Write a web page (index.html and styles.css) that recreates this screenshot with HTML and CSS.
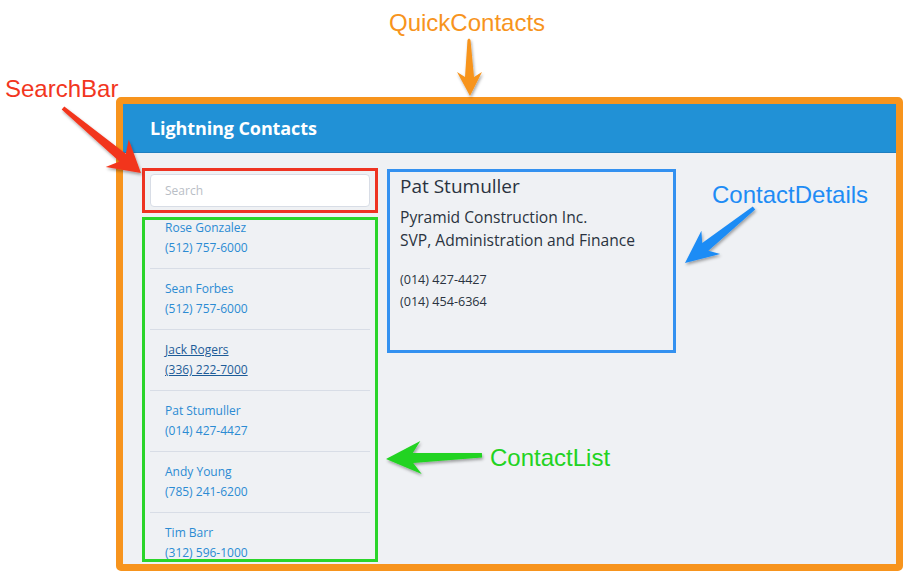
FILE: index.html
```html
<!DOCTYPE html>
<html lang="en">
<head>
<meta charset="utf-8">
<title>QuickContacts</title>
<link rel="stylesheet" href="styles.css">
</head>
<body>
<div class="page">
  <div class="annot annot-quick">QuickContacts</div>
  <div class="annot annot-search">SearchBar</div>
  <div class="annot annot-details">ContactDetails</div>
  <div class="annot annot-list">ContactList</div>

  <div class="frame">
    <header class="app-header"><h1 class="app-title">Lightning Contacts</h1></header>
    <div class="app-body">
      <div class="left-col">
        <div class="search-box"><input class="search-input" type="text" placeholder="Search"></div>
        <div class="list-box">
          <ul class="contact-list">
            <li class="contact-item"><a class="contact-link" href="#"><span class="c-name">Rose Gonzalez</span><span class="c-phone">(512) 757-6000</span></a></li>
            <li class="contact-item"><a class="contact-link" href="#"><span class="c-name">Sean Forbes</span><span class="c-phone">(512) 757-6000</span></a></li>
            <li class="contact-item"><a class="contact-link hover" href="#"><span class="c-name">Jack Rogers</span><span class="c-phone">(336) 222-7000</span></a></li>
            <li class="contact-item"><a class="contact-link" href="#"><span class="c-name">Pat Stumuller</span><span class="c-phone">(014) 427-4427</span></a></li>
            <li class="contact-item"><a class="contact-link" href="#"><span class="c-name">Andy Young</span><span class="c-phone">(785) 241-6200</span></a></li>
            <li class="contact-item"><a class="contact-link" href="#"><span class="c-name">Tim Barr</span><span class="c-phone">(312) 596-1000</span></a></li>
          </ul>
        </div>
      </div>
      <div class="details-box">
        <div class="d-name">Pat Stumuller</div>
        <div class="d-company">Pyramid Construction Inc.<br>SVP, Administration and Finance</div>
        <div class="d-phones">(014) 427-4427<br>(014) 454-6364</div>
      </div>
    </div>
  </div>

  <svg class="arrows" width="904" height="572" viewBox="0 0 904 572" aria-hidden="true">
    <defs>
      <filter id="sh" x="-20%" y="-20%" width="140%" height="140%">
        <feDropShadow dx="1" dy="2" stdDeviation="1.5" flood-color="#000" flood-opacity="0.35"/>
      </filter>
    </defs>
    <path filter="url(#sh)" fill="#f7941d" d="M467.5,40 Q469,37 470.5,40 L474,77 L482,72 L470,96 L457,72 L465,77 Z"/>
    <path filter="url(#sh)" fill="#f2361e" d="M61.7,109.5 L119.4,161.4 L105.7,167 L141,173 L128.7,139.4 L125.8,153.8 L64.3,106.5 Z"/>
    <path filter="url(#sh)" fill="#1e8cf5" d="M752.8,206.4 L702.2,242.9 L701.4,230.7 L685,263 L720.2,254.1 L708.4,250.7 L755.2,209.6 Z"/>
    <path filter="url(#sh)" fill="#22d322" d="M481.9,453 L412.8,452.9 L420.3,441 L386,459 L421.7,474 L413.2,462.9 L482.1,457.5 Z"/>
  </svg>
</div>
</body>
</html>
```
FILE: styles.css
```css
html, body {
  margin: 0;
  padding: 0;
  background: #ffffff;
}

.page {
  position: relative;
  width: 904px;
  height: 572px;
  box-sizing: border-box;
  padding: 97px 0 0 116px;
  overflow: hidden;
  background: #ffffff;
}

.annot {
  position: absolute;
  font-family: "Liberation Sans", Arial, sans-serif;
  font-size: 24px;
  line-height: 24px;
  white-space: nowrap;
}
.annot-quick { left: 389px; top: 11px; color: #f7941d; }
.annot-search { left: 5px; top: 77px; color: #f2361e; }
.annot-details { left: 712px; top: 183px; color: #1e8cf5; }
.annot-list { left: 490px; top: 446px; color: #22d322; }

.arrows {
  position: absolute;
  left: 0;
  top: 0;
  pointer-events: none;
}

.frame {
  width: 787px;
  height: 474px;
  box-sizing: border-box;
  border: 7px solid #f7941d;
  border-radius: 5px;
  background: #eff1f4;
  display: flex;
  flex-direction: column;
  overflow: hidden;
}

.app-header {
  flex: none;
  height: 49px;
  box-sizing: border-box;
  background: #2191d6;
  border-bottom: 1px solid #1f7fc0;
  display: flex;
  align-items: center;
  padding-left: 27px;
}

.app-title {
  margin: 0;
  font-family: "Open Sans", "Noto Sans", sans-serif;
  font-weight: 700;
  font-size: 18px;
  color: #ffffff;
  letter-spacing: -0.1px;
}

.app-body {
  flex: 1;
  min-height: 0;
  display: flex;
  align-items: flex-start;
  gap: 9px;
  padding: 15px 0 0 19px;
  font-family: "Open Sans", "Noto Sans", sans-serif;
}

.left-col {
  width: 236px;
  display: flex;
  flex-direction: column;
  gap: 4px;
}

.search-box {
  border: 3px solid #ee3322;
  padding: 3px 5px;
}

.search-input {
  display: block;
  width: 100%;
  height: 33px;
  box-sizing: border-box;
  border: 1px solid #d8dde6;
  border-radius: 4px;
  background: #ffffff;
  padding: 0 14px;
  font-family: "Open Sans", "Noto Sans", sans-serif;
  font-size: 12px;
  color: #333;
  outline: none;
}
.search-input::placeholder { color: #b9bec6; }

.list-box {
  height: 345px;
  box-sizing: border-box;
  border: 3px solid #2ad52a;
  padding: 0 5px;
  overflow: hidden;
}

.contact-list {
  list-style: none;
  margin: -12px 0 0;
  padding: 0;
}

.contact-item {
  padding: 10px 15px;
  border-bottom: 1px solid #d8dde6;
}
.contact-item:last-child { border-bottom: none; }

.contact-link {
  display: flex;
  flex-direction: column;
  align-items: flex-start;
  text-decoration: none;
  color: #2b8bd3;
  font-size: 12px;
  line-height: 20px;
}
.contact-link.hover { color: #1d5c98; }
.contact-link.hover .c-name,
.contact-link.hover .c-phone { text-decoration: underline; }

.details-box {
  width: 289px;
  height: 184px;
  box-sizing: border-box;
  margin-top: 1px;
  border: 3px solid #3391f0;
  padding: 2px 10px;
  color: #2a3340;
}

.d-name {
  font-size: 19px;
  line-height: 24px;
}

.d-company {
  margin-top: 8px;
  font-size: 15.6px;
  line-height: 23px;
}

.d-phones {
  margin-top: 17px;
  font-size: 12.6px;
  line-height: 22px;
}
```
